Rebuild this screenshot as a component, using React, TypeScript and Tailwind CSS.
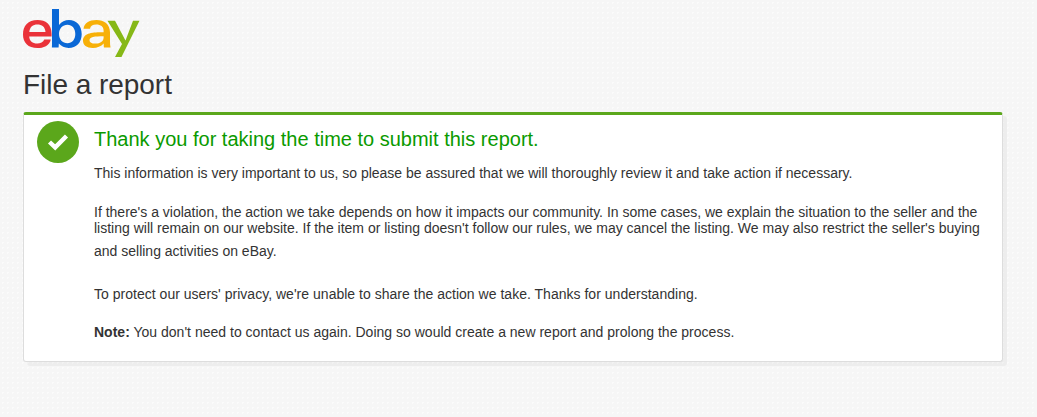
export default function App() {
  return (
    <div className="min-h-[417px] bg-[#f6f6f6] bg-[radial-gradient(#fbfbfb_1px,transparent_1px)] bg-[length:5px_5px] px-[23px] pt-[9px] font-['Liberation_Sans',Arial,sans-serif] text-[#333]">
      <svg viewBox="0 0 117 48" className="block h-[48px] w-[117px]" aria-label="eBay">
        <path fill="#ea3239" fillRule="evenodd" d="M6.2 27.4C6.4 32 9.6 34.4 14.2 34.4C17.4 34.4 20.3 33.2 21.3 30.4H27.8C26.6 36.6 20.2 39 14.5 39C5 39 0 33.4 0 25.4C0 16.6 5 11 14.6 11C22.6 11 28.6 15.2 28.6 25V27.4ZM22.5 23C22.2 18 18.8 15.6 14.4 15.6C10 15.6 6.8 18 6.3 23Z" />
        <path fill="#0a68d6" fillRule="evenodd" d="M29 0H36V16C38.6 12.8 42 11 46 11C53.4 11 58.7 16.5 58.7 25C58.7 33.5 53.4 39 45.6 39C41.6 39 38.2 37.3 35.8 34.6C35.8 36 35.7 37.2 35.6 38.4H28.9C29 36.7 29 34.5 29 32.5ZM44.4 34.3C49.2 34.3 52.3 30.4 52.3 25C52.3 19.6 49.2 15.7 44.4 15.7C39.6 15.7 36 19.6 36 25C36 30.4 39.6 34.3 44.4 34.3Z" />
        <path fill="#f7b008" fillRule="evenodd" d="M87 23.5C87 15 81 11 73.5 11C66 11 61.3 14 60.5 19.8H67C67.5 16.8 69.8 15.5 73.2 15.5C77.8 15.5 80.6 17.6 80.6 21.8V23.2C72 23.2 60 23 60 31.8C60 36.3 63.6 39 69.8 39C74.3 39 78 37.3 80.7 34.5C80.7 36 80.8 37.3 80.9 38.4H87.5C87.1 36.6 87 34.5 87 32.5ZM80.6 27.2V28.5C80.6 32 77.9 34.6 72.3 34.6C68.6 34.6 66.5 33.6 66.5 31.2C66.5 27.7 71.5 27.2 80.6 27.2Z" />
        <path fill="#86b817" d="M84.5 11.8H92L102.5 31.5L110 11.8H116.5L98.5 48H92L99 35Z" />
      </svg>
      <h1 className="mt-[9px] text-[28px] leading-[38px] font-normal tracking-[-0.04px]">File a report</h1>
      <div className="mt-[8px] flex h-[250px] w-[980px] gap-[15px] rounded-[3px] border border-t-[3px] border-[#dddddd] border-t-[#5ba71b] bg-white pt-[6px] pl-[13px] shadow-[4px_4px_0_rgba(0,0,0,0.035)]">
        <div className="flex size-[42px] shrink-0 items-center justify-center rounded-full bg-[#5ba71b]">
          <svg viewBox="0 0 20 16" className="h-[16px] w-[20px] overflow-visible">
            <path fill="none" stroke="#fff" strokeWidth="4.4" d="M1.5 8L7.2 13.4L18.5 2" />
          </svg>
        </div>
        <div className="min-w-0 flex-1 pt-[5px] text-[14px]">
          <h2 className="text-[20px] leading-[26px] font-normal text-[#0a9a00]">Thank you for taking the time to submit this report.</h2>
          <p className="mt-[11px] leading-[20px]">This information is very important to us, so please be assured that we will thoroughly review it and take action if necessary.</p>
          <p className="mt-[21px] leading-[16px]">If there's a violation, the action we take depends on how it impacts our community. In some cases, we explain the situation to the seller and the listing will remain on our website. If the item or listing doesn't follow our rules, we may cancel the listing. We may also restrict the seller's buying</p>
          <p className="mt-[5px] leading-[20px]">and selling activities on eBay.</p>
          <p className="mt-[23px] leading-[20px] tracking-[0.02px]">To protect our users' privacy, we're unable to share the action we take. Thanks for understanding.</p>
          <p className="mt-[18px] leading-[20px] tracking-[0.01px]"><b>Note:</b> You don't need to contact us again. Doing so would create a new report and prolong the process.</p>
        </div>
      </div>
    </div>
  );
}
